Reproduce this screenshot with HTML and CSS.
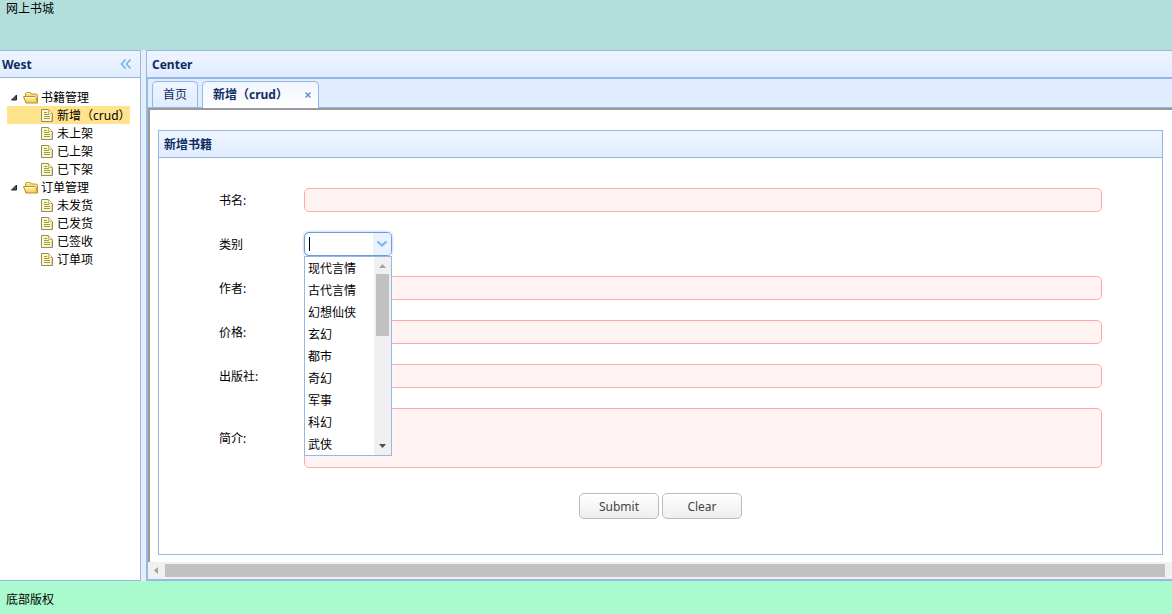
FILE: index.html
```html
<!DOCTYPE html>
<html lang="zh-CN">
<head>
<meta charset="utf-8">
<title>网上书城</title>
<link rel="stylesheet" href="styles.css">
</head>
<body class="layout">
<svg class="defs" width="0" height="0" aria-hidden="true">
  <linearGradient id="gold" x1="0" y1="0" x2="0" y2="1"><stop offset="0" stop-color="#fff6b0"/><stop offset="1" stop-color="#f3c850"/></linearGradient>
  <symbol id="arrow" viewBox="0 0 16 18"><path d="M9.500 7v5H4.500z" fill="#505050" stroke="#222" stroke-width="1" stroke-linejoin="round"/></symbol>
  <symbol id="folder" viewBox="0 0 16 18">
    <path d="M2.500 14.500v-9l1-1h4l1 1.500h5l1 1v7.500z" fill="#f7dc7c" stroke="#c39a35"/>
    <path d="M4 5.500h3" stroke="#fff6bd"/>
    <path d="M.5 8.500h11.500l1 1 1.500 5.500H3z" fill="url(#gold)" stroke="#b98f2a" stroke-linejoin="round"/>
    <path d="M2 9.500h9.500" stroke="#fffce0"/>
  </symbol>
  <symbol id="file" viewBox="0 0 16 18">
    <path d="M2.500 3.500h7l4 4v8h-11z" fill="#fffbaf" stroke="#8b8b82"/>
    <path d="M9.500 3.500v4h4z" fill="#fff8c8" stroke="#c3b57a"/>
    <path d="M5 6.500h3M5 8.500h5M5 10.500h6M5 12.500h6" stroke="#98947a"/>
    <path d="M12.500 9v6" stroke="#f6d084"/>
  </symbol>
</svg>

<header class="north">网上书城</header>

<div class="middle">
  <aside class="west">
    <div class="panel-header west-header">
      <h2 class="panel-title">West</h2>
      <button class="collapse" type="button" aria-label="折叠">
        <svg width="12" height="12" viewBox="0 0 12 12"><path d="M5.500 1.500 1.500 6l4 4.500M10.500 1.500l-4 4.500 4 4.500" fill="none" stroke="#6fb7ee" stroke-width="1.700"/></svg>
      </button>
    </div>
    <ul class="tree">
      <li>
        <div class="node"><svg class="icon"><use href="#arrow"/></svg><svg class="icon"><use href="#folder"/></svg><span class="node-title">书籍管理</span></div>
        <ul class="children">
          <li class="node selected"><svg class="icon"><use href="#file"/></svg><a class="node-title" href="#">新增（crud）</a></li>
          <li class="node"><svg class="icon"><use href="#file"/></svg><a class="node-title" href="#">未上架</a></li>
          <li class="node"><svg class="icon"><use href="#file"/></svg><a class="node-title" href="#">已上架</a></li>
          <li class="node"><svg class="icon"><use href="#file"/></svg><a class="node-title" href="#">已下架</a></li>
        </ul>
      </li>
      <li>
        <div class="node"><svg class="icon"><use href="#arrow"/></svg><svg class="icon"><use href="#folder"/></svg><span class="node-title">订单管理</span></div>
        <ul class="children">
          <li class="node"><svg class="icon"><use href="#file"/></svg><a class="node-title" href="#">未发货</a></li>
          <li class="node"><svg class="icon"><use href="#file"/></svg><a class="node-title" href="#">已发货</a></li>
          <li class="node"><svg class="icon"><use href="#file"/></svg><a class="node-title" href="#">已签收</a></li>
          <li class="node"><svg class="icon"><use href="#file"/></svg><a class="node-title" href="#">订单项</a></li>
        </ul>
      </li>
    </ul>
  </aside>

  <main class="center">
    <div class="panel-header center-header"><h2 class="panel-title">Center</h2></div>
    <div class="tabs">
      <div class="tab-strip">
        <div class="tab"><button class="tab-label" type="button">首页</button></div>
        <div class="tab tab-active">
          <button class="tab-label" type="button">新增（crud）</button>
          <button class="tab-close" type="button" aria-label="关闭"><svg width="8" height="8" viewBox="0 0 8 8"><path d="m1.500 1.500 5 5M6.500 1.500l-5 5" stroke="#6b8fc4" stroke-width="1.500"/></svg></button>
        </div>
      </div>
      <div class="frame">
        <section class="panel">
          <div class="panel-header form-header"><h2 class="panel-title">新增书籍</h2></div>
          <form class="form">
            <div class="row"><label class="label" for="name">书名:</label><input class="field" id="name" type="text"></div>
            <div class="row">
              <label class="label" for="kind">类别</label>
              <div class="combo">
                <div class="combo-box">
                  <span class="caret"></span>
                  <input class="combo-input" id="kind" type="text">
                  <button class="combo-arrow" type="button" aria-label="展开"><svg width="12" height="8" viewBox="0 0 12 8"><path d="m1.500 1.500 4.500 4 4.500-4" fill="none" stroke="#72bbf0" stroke-width="2.200"/></svg></button>
                </div>
                <div class="dropdown">
                  <select class="options" size="9" aria-label="类别选项">
                    <option>现代言情</option><option>古代言情</option><option>幻想仙侠</option><option>玄幻</option><option>都市</option><option>奇幻</option><option>军事</option><option>科幻</option><option>武侠</option>
                  </select>
                  <div class="vbar">
                    <svg class="vbar-end" viewBox="0 0 17 17"><path d="M5 11h7L8.500 7z" fill="#a3a3a3"/></svg>
                    <div class="vbar-thumb"></div>
                    <svg class="vbar-end vbar-last" viewBox="0 0 17 17"><path d="M5 6h7l-3.500 4z" fill="#505050"/></svg>
                  </div>
                </div>
              </div>
            </div>
            <div class="row"><label class="label" for="author">作者:</label><input class="field" id="author" type="text"></div>
            <div class="row"><label class="label" for="price">价格:</label><input class="field" id="price" type="text"></div>
            <div class="row"><label class="label" for="press">出版社:</label><input class="field" id="press" type="text"></div>
            <div class="row"><label class="label" for="intro">简介:</label><textarea class="field field-tall" id="intro"></textarea></div>
            <div class="actions"><button class="btn" type="button">Submit</button><button class="btn" type="button">Clear</button></div>
          </form>
        </section>
      </div>
      <div class="hbar">
        <svg class="hbar-end" viewBox="0 0 17 17"><path d="M10 5v7L6 8.500z" fill="#a3a3a3"/></svg>
        <div class="hbar-thumb"></div>
      </div>
    </div>
  </main>
</div>

<footer class="south">底部版权</footer>
</body>
</html>
```
FILE: styles.css
```css
* { box-sizing: border-box; }

body, h2, ul { margin: 0; padding: 0; }
ul { list-style: none; }
button, input, textarea, select { font: inherit; color: inherit; }
button { padding: 0; border: 0; background: none; }
svg { display: block; }
.defs { position: absolute; }

.layout {
  display: flex;
  flex-direction: column;
  min-height: 100vh;
  background: #fff;
  color: #000;
  font: 12px/18px "Noto Sans", "Noto Sans CJK SC", sans-serif;
}

.north {
  flex: none;
  height: 50px;
  padding-left: 6px;
  background: #b3dfda;
}

.south {
  flex: none;
  padding: 10px 6px 5px;
  background: #a9facd;
}

.middle {
  display: flex;
  flex: 1;
  gap: 5px;
  background: #e6eef8;
}

.panel-header {
  display: flex;
  align-items: center;
  justify-content: space-between;
  height: 27px;
  border-bottom: 1px solid #95b8e7;
  background: linear-gradient(#eff5ff, #e0ecff);
}

.panel-title {
  padding-top: 2px;
  color: #0e2d5f;
  font-size: 12px;
  font-weight: bold;
}

/* Navigation */
.west {
  flex: none;
  width: 141px;
  border: 1px solid #95b8e7;
  border-left: 0;
  background: #fff;
}

.west-header { padding: 0 8px 0 2px; }
.tree { padding: 10px 10px 0 7px; }

.node {
  display: flex;
  height: 18px;
  line-height: 20px;
  white-space: nowrap;
}

.children .node { padding-left: 32px; }
.selected { background: #ffe48d; }
.icon { flex: none; width: 16px; height: 18px; }
.node-title { padding-left: 2px; color: inherit; text-decoration: none; }

/* Work area */
.center {
  display: flex;
  flex: 1;
  flex-direction: column;
  min-width: 0;
  border: 1px solid #95b8e7;
  border-right: 0;
}

.center-header { padding-left: 5px; }

.tabs {
  display: flex;
  flex: 1;
  flex-direction: column;
  border: 1px solid #95b8e7;
  border-right: 0;
}

.tab-strip {
  display: flex;
  gap: 4px;
  height: 29px;
  padding: 2px 4px 0;
  border-bottom: 1px solid #95b8e7;
  background: #e0ecff;
}

.tab {
  display: flex;
  align-items: center;
  height: 26px;
  padding: 0 10px;
  border: 1px solid #95b8e7;
  border-bottom: 0;
  border-radius: 5px 5px 0 0;
  background: linear-gradient(#eff5ff, #e0ecff);
  color: #0e2d5f;
}

.tab-active {
  gap: 16px;
  height: 27px;
  padding: 0 6px 0 10px;
  background: linear-gradient(#eff5ff, #fff);
  font-weight: bold;
}

.frame {
  flex: 1;
  padding: 20px 9px 7px 8px;
  border-top: 2px solid #9a9a9a;
  border-left: 2px solid #9a9a9a;
  background: #fff;
}

.panel {
  height: 100%;
  border: 1px solid #95b8e7;
}

.form-header { padding-left: 5px; }

.form {
  display: flex;
  flex-direction: column;
  gap: 20px;
  padding: 30px 60px 35px;
}

.row { display: flex; align-items: center; }
.label { flex: none; width: 85px; padding-top: 2px; }

.field {
  flex: 1;
  min-width: 0;
  height: 24px;
  padding: 0 4px;
  border: 1px solid #ffa8a8;
  border-radius: 5px;
  background: #fff3f3;
}

.field-tall { height: 60px; resize: none; }

.combo { position: relative; width: 88px; }

.combo-box {
  display: flex;
  align-items: center;
  height: 24px;
  padding-left: 4px;
  overflow: hidden;
  border: 1px solid #6b9cde;
  border-radius: 5px;
  background: #fff;
  box-shadow: 0 0 3px #95b8e7;
}

.caret { flex: none; width: 1px; height: 14px; background: #000; }

.combo-input {
  flex: 1;
  min-width: 0;
  height: 22px;
  padding: 0;
  border: 0;
  outline: 0;
  background: none;
}

.combo-arrow {
  display: flex;
  flex: none;
  align-items: center;
  justify-content: center;
  width: 18px;
  height: 22px;
  background: #eaf2ff;
}

.dropdown {
  position: absolute;
  z-index: 1;
  top: 100%;
  left: 0;
  display: flex;
  width: 100%;
  height: 200px;
  border: 1px solid #95b8e7;
  background: #fff;
}

.options {
  flex: 1;
  min-width: 0;
  padding: 0;
  overflow: hidden;
  border: 0;
  outline: 0;
  background: #fff;
}

.options option { height: 22px; min-height: 22px; padding: 2px 3px; line-height: 18px; }

.vbar {
  display: flex;
  flex: none;
  flex-direction: column;
  align-items: center;
  width: 17px;
  background: #f0f0f0;
}

.vbar-end { width: 17px; height: 17px; }
.vbar-last { margin-top: auto; }
.vbar-thumb { width: 13px; height: 62px; background: #c1c1c1; }

.actions {
  display: flex;
  justify-content: center;
  gap: 3px;
  padding: 5px 0 0;
}

.btn {
  width: 80px;
  height: 26px;
  padding-top: 2px;
  border: 1px solid #bbb;
  border-radius: 5px;
  background: linear-gradient(#fff, #eee);
  color: #444;
}

.hbar {
  display: flex;
  align-items: center;
  height: 17px;
  padding-right: 7px;
  background: #f0f0f0;
}

.hbar-end { flex: none; width: 17px; height: 17px; }
.hbar-thumb { flex: 1; height: 13px; background: #c1c1c1; }
```
